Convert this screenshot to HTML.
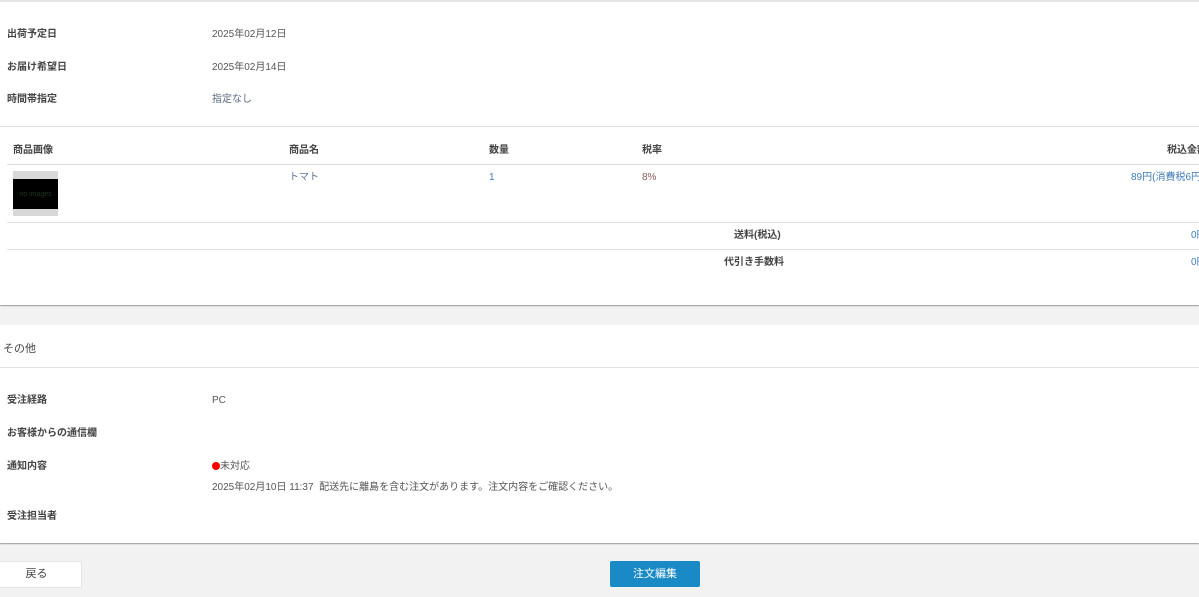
<!DOCTYPE html>
<html><head><meta charset="utf-8"><style>
body{margin:0;width:1199px;height:597px;background:#f2f2f2;position:relative;overflow:hidden;font-family:"Liberation Sans","Noto Sans CJK JP",sans-serif;font-size:10px;color:#555}
.p{position:absolute;left:0;width:1199px;background:#fff}
.t{position:absolute;white-space:nowrap;line-height:12px;margin-top:2px}
.b{font-weight:bold;color:#444}
.l{position:absolute;height:1px;background:#e2e2e2}
.blue{color:#3f7cba}
</style></head><body>
<div class="p" style="top:0;height:303px;border-top:2px solid #e6e6e6;box-shadow:0 1px 1px #999"></div>
<div class="t b" style="left:7px;top:27px">出荷予定日</div><div class="t" style="left:212px;top:27px">2025年02月12日</div>
<div class="t b" style="left:7px;top:60px">お届け希望日</div><div class="t" style="left:212px;top:60px">2025年02月14日</div>
<div class="t b" style="left:7px;top:92px">時間帯指定</div><div class="t" style="left:212px;top:92px;color:#5a6a80">指定なし</div>
<div class="l" style="left:0;top:126px;width:1199px"></div>
<div class="t b" style="left:13px;top:143px">商品画像</div>
<div class="t b" style="left:289px;top:143px">商品名</div>
<div class="t b" style="left:489px;top:143px">数量</div>
<div class="t b" style="left:642px;top:143px">税率</div>
<div class="t b" style="left:1167px;top:143px">税込金額</div>
<div class="l" style="left:7px;top:164px;width:1192px;background:#ddd"></div>
<div style="position:absolute;left:13px;top:171px;width:45px;height:45px;background:#d8d8d8"></div>
<div style="position:absolute;left:13px;top:179px;width:45px;height:30px;background:#000;color:#1a3a1a;font-size:7px;line-height:32px;text-align:center">no images</div>
<div class="t" style="left:289px;top:170px;color:#5b7aa0">トマト</div>
<div class="t blue" style="left:489px;top:170px">1</div>
<div class="t" style="left:642px;top:170px;color:#8a5a5a">8%</div>
<div class="t blue" style="left:1131px;top:170px">89円(消費税6円)</div>
<div class="l" style="left:7px;top:222px;width:1192px"></div>
<div class="t b" style="left:734px;top:228px">送料(税込)</div><div class="t blue" style="left:1191px;top:228px">0円</div>
<div class="l" style="left:7px;top:249px;width:1192px"></div>
<div class="t b" style="left:724px;top:255px">代引き手数料</div><div class="t blue" style="left:1191px;top:255px">0円</div>
<div class="p" style="top:325px;height:218px;box-shadow:0 1px 1px #999"></div>
<div class="t" style="left:3px;top:341px;font-size:11px;color:#444">その他</div>
<div class="l" style="left:0;top:367px;width:1199px"></div>
<div class="t b" style="left:7px;top:393px">受注経路</div><div class="t" style="left:212px;top:393px">PC</div>
<div class="t b" style="left:7px;top:426px">お客様からの通信欄</div>
<div class="t b" style="left:7px;top:459px">通知内容</div>
<div class="t" style="left:212px;top:459px"><span style="display:inline-block;width:8px;height:8px;border-radius:50%;background:#f00;vertical-align:-1px"></span>未対応</div>
<div class="t" style="left:212px;top:480px">2025年02月10日 11:37&nbsp; 配送先に離島を含む注文があります。注文内容をご確認ください。</div>
<div class="t b" style="left:7px;top:509px">受注担当者</div>
<div style="position:absolute;left:0;top:561px;width:73px;padding-right:8px;height:25px;background:#fff;border:1px solid #e4e4e4;border-left:none;text-align:center;line-height:25px;font-size:11px;color:#444">戻る</div>
<div style="position:absolute;left:610px;top:561px;width:90px;height:26px;background:#1a8ac6;border-radius:2px;text-align:center;line-height:26px;font-size:11px;color:#fff">注文編集</div>
</body></html>
